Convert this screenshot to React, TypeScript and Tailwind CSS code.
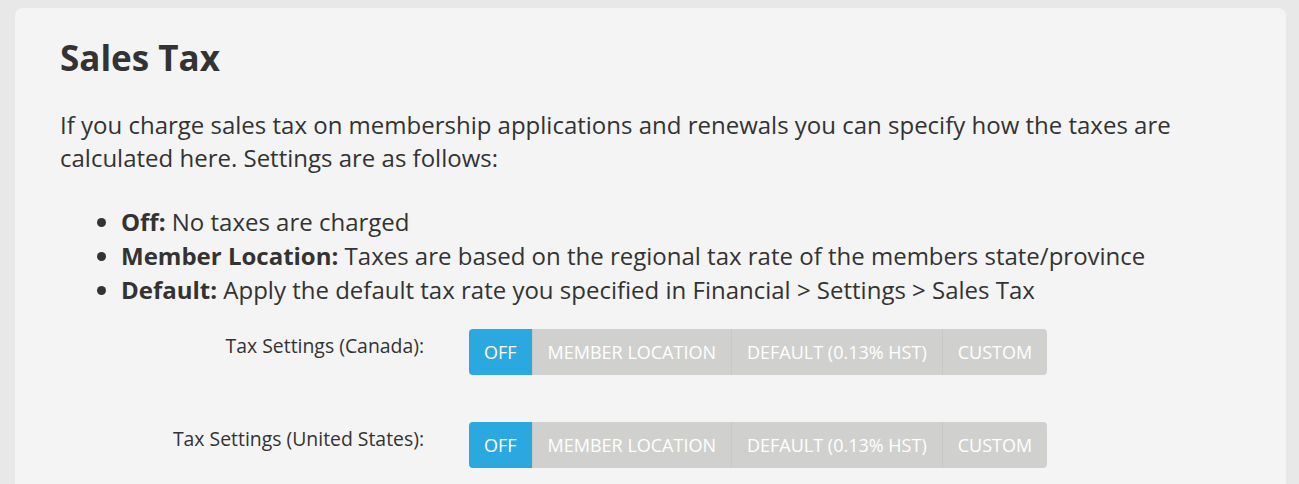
const options = ['Off', 'Member Location', 'Default (0.13% HST)', 'Custom'];

function TaxToggle({ selected }: { selected: string }) {
  return (
    <div className="flex h-[46px] rounded-[4px] overflow-hidden">
      {options.map((opt, i) => (
        <div
          key={opt}
          className={
            (opt === selected ? 'bg-[#2ca8e0] ' : 'bg-[#d0d1ce] ') +
            (i > 0 ? 'border-l border-[#c8c9c6] ' : '') +
            'flex items-center px-[15px] text-[18px] uppercase text-white'
          }
        >
          {opt}
        </div>
      ))}
    </div>
  );
}

function SettingRow({ label }: { label: string }) {
  return (
    <div className="flex items-start">
      <div className="w-[364px] pt-[5px] text-right text-[19.4px] leading-[24px] text-[#333]">{label}</div>
      <div className="ml-[45px]">
        <TaxToggle selected="Off" />
      </div>
    </div>
  );
}

export default function App() {
  return (
    <div
      className="min-h-screen bg-[#e8e8e8] pl-[15px] pr-[13px] pt-[8px]"
      style={{ fontFamily: '"Open Sans", "Liberation Sans", sans-serif' }}
    >
      <div className="rounded-[8px] bg-[#f4f4f4] px-[45px] pt-[28px] pb-10 text-[#333]">
        <h1 className="text-[35px] font-bold leading-[44px]">Sales Tax</h1>
        <p className="mt-[28px] text-[24px] leading-[33px]">
          If you charge sales tax on membership applications and renewals you can specify how the taxes are
          calculated here. Settings are as follows:
        </p>
        <ul className="mt-[31px] list-disc pl-[61px] text-[24px] leading-[34px]">
          <li>
            <b>Off:</b> No taxes are charged
          </li>
          <li>
            <b>Member Location:</b> Taxes are based on the regional tax rate of the members state/province
          </li>
          <li>
            <b>Default:</b> Apply the default tax rate you specified in Financial &gt; Settings &gt; Sales Tax
          </li>
        </ul>
        <div className="mt-[22px] flex flex-col gap-[47px]">
          <SettingRow label="Tax Settings (Canada):" />
          <SettingRow label="Tax Settings (United States):" />
        </div>
      </div>
    </div>
  );
}
